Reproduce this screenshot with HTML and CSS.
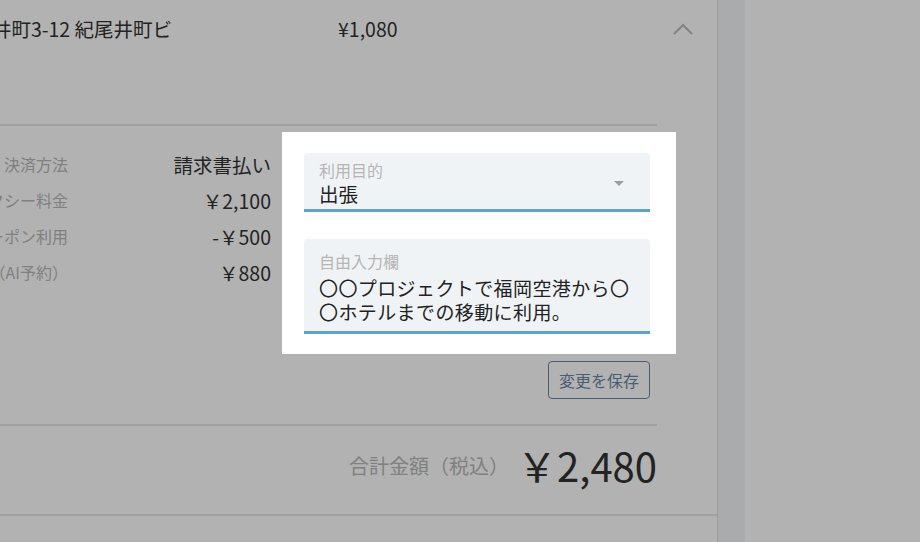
FILE: index.html
```html
<!DOCTYPE html>
<html lang="ja">
<head>
    <meta charset="UTF-8">
    <meta name="viewport" content="width=device-width, initial-scale=1.0">
    <title>予約詳細</title>
    <link rel="stylesheet" href="styles.css">
</head>
<body>
    <div class="card">
        <div class="head">
            <div class="addr"><span>東京都千代田区紀尾井町3-12 紀尾井町ビ</span></div>
            <div class="price">¥1,080</div>
            <svg class="chevron" width="20" height="12" viewBox="0 0 20 12">
                <polyline points="1,11 10,2 19,11" fill="none" stroke="#bdbdbd" stroke-width="2"/>
            </svg>
        </div>

        <div class="body">
            <div class="details">
                <div class="summary">
                    <div class="label">決済方法</div>
                    <div class="value">請求書払い</div>
                    <div class="label">タクシー料金</div>
                    <div class="value">￥2,100</div>
                    <div class="label">クーポン利用</div>
                    <div class="value">-￥500</div>
                    <div class="label">乗車料金（AI予約）</div>
                    <div class="value">￥880</div>
                </div>

                <div class="form">
                    <div class="fields">
                        <div class="field select">
                            <div class="field-body">
                                <div class="field-label">利用目的</div>
                                <div class="field-value">出張</div>
                            </div>
                            <svg class="caret" width="10" height="5" viewBox="0 0 10 5">
                                <polygon points="0,0 10,0 5,5" fill="#9e9e9e"/>
                            </svg>
                        </div>
                        <div class="field memo">
                            <div class="field-label">自由入力欄</div>
                            <div class="field-text">〇〇プロジェクトで福岡空港から〇〇ホテルまでの移動に利用。</div>
                        </div>
                        <!-- tutorial spotlight -->
                        <div class="spot"></div>
                    </div>
                    <button class="save">変更を保存</button>
                </div>
            </div>

            <div class="total">
                <span class="total-label">合計金額（税込）</span>
                <span class="total-amount">￥2,480</span>
            </div>
        </div>

        <div class="next"></div>
    </div>
    <div class="gutter"></div>
    <div class="side"></div>
</body>
</html>
```

FILE: styles.css
```css
* {
    margin: 0;
    padding: 0;
    box-sizing: border-box;
}

body {
    font-family: "Noto Sans CJK JP", "Noto Sans", sans-serif;
    color: #333;
    background: #fff;
    display: flex;
    height: 542px;
    overflow: hidden;
}

.card {
    flex: 0 0 814px;
    margin-left: -96px;
    border-right: 1px solid #e2e2e2;
    background: #fff;
    display: flex;
    flex-direction: column;
}

.head {
    display: flex;
    align-items: center;
    padding: 16px 24px 82px 0;
    font-size: 19.5px;
    line-height: 26px;
    white-space: nowrap;
}

.addr {
    flex: 0 0 268px;
    min-width: 0;
    display: flex;
    justify-content: flex-end;
}

.price {
    margin-left: 166px;
}

.chevron {
    margin-left: auto;
}

.body {
    margin-right: 60px;
}

.details {
    display: flex;
    align-items: flex-start;
    border-top: 2px solid #e6e6e6;
    border-bottom: 2px solid #e6e6e6;
    padding-bottom: 25px;
}

.summary {
    flex: 0 0 367px;
    display: grid;
    grid-template-columns: 164px 203px;
    grid-auto-rows: 36px;
    align-items: center;
    margin-top: 20px;
    white-space: nowrap;
}

.summary .label {
    display: flex;
    justify-content: flex-end;
    font-size: 16px;
    color: #b8b8b8;
}

.summary .value {
    text-align: right;
    font-size: 19.5px;
    color: #333;
}

.form {
    flex: 0 0 346px;
    margin-left: 33px;
    padding-top: 27px;
    display: flex;
    flex-direction: column;
    align-items: flex-end;
}

.fields {
    position: relative;
    width: 100%;
    display: flex;
    flex-direction: column;
    gap: 27px;
}

.field {
    background: #f0f3f6;
    border-radius: 4px 4px 0 0;
    border-bottom: 3px solid #5ba5ca;
    padding-left: 15px;
}

.field-label {
    font-size: 16px;
    line-height: 20px;
    color: #b5b5b5;
}

.select {
    display: flex;
    align-items: center;
    padding: 7px 26px 3px 15px;
}

.select .field-label {
    margin-bottom: 2px;
}

.field-body {
    flex: 1;
}

.field-value {
    font-size: 19.5px;
    line-height: 24px;
    color: #222;
}

.memo {
    padding: 12px 10px 7px 15px;
}

.field-text {
    margin-top: 5px;
    font-size: 19px;
    line-height: 24px;
    letter-spacing: 0.4px;
    color: #222;
}

.spot {
    position: absolute;
    top: -21px;
    right: -26px;
    bottom: -20px;
    left: -22px;
    box-shadow: 0 0 0 2000px rgba(0, 0, 0, 0.3);
    pointer-events: none;
    z-index: 10;
}

.save {
    margin-top: 27px;
    height: 38px;
    width: 102px;
    font-family: inherit;
    font-size: 16px;
    color: #6b87a3;
    background: #fff;
    border: 1.5px solid #6b87a3;
    border-radius: 4px;
    cursor: pointer;
}

.total {
    height: 88px;
    display: flex;
    justify-content: flex-end;
    align-items: center;
    gap: 8px;
    padding-bottom: 10px;
    white-space: nowrap;
}

.total-label {
    font-size: 20px;
    color: #b8b8b8;
}

.total-amount {
    font-size: 40px;
    line-height: 50px;
    color: #333;
}

.next {
    flex: 1;
    border-top: 2px solid #e6e6e6;
}

.gutter {
    flex: 0 0 27px;
    background: #f2f5f7;
}

.side {
    flex: 1;
    background: #fff;
}
```
